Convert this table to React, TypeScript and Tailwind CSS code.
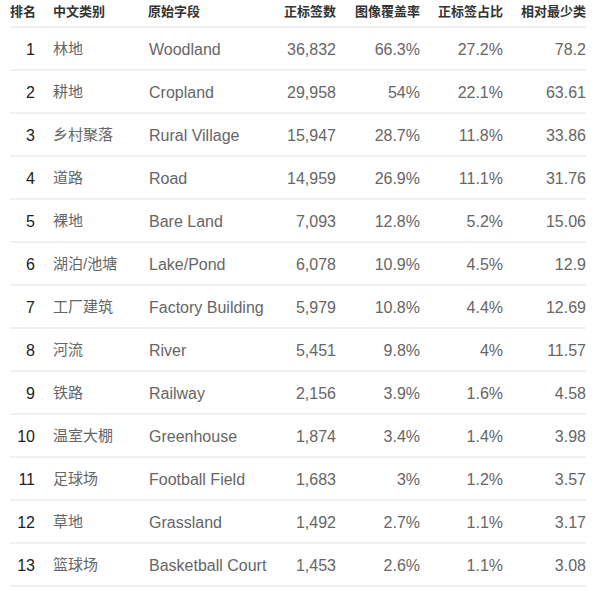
import React from "react";

interface Row {
  rank: number;
  zh: string;
  en: string;
  count: string;
  cover: string;
  ratio: string;
  rel: string;
}

const rows: Row[] = [
  { rank: 1, zh: "林地", en: "Woodland", count: "36,832", cover: "66.3%", ratio: "27.2%", rel: "78.2" },
  { rank: 2, zh: "耕地", en: "Cropland", count: "29,958", cover: "54%", ratio: "22.1%", rel: "63.61" },
  { rank: 3, zh: "乡村聚落", en: "Rural Village", count: "15,947", cover: "28.7%", ratio: "11.8%", rel: "33.86" },
  { rank: 4, zh: "道路", en: "Road", count: "14,959", cover: "26.9%", ratio: "11.1%", rel: "31.76" },
  { rank: 5, zh: "裸地", en: "Bare Land", count: "7,093", cover: "12.8%", ratio: "5.2%", rel: "15.06" },
  { rank: 6, zh: "湖泊/池塘", en: "Lake/Pond", count: "6,078", cover: "10.9%", ratio: "4.5%", rel: "12.9" },
  { rank: 7, zh: "工厂建筑", en: "Factory Building", count: "5,979", cover: "10.8%", ratio: "4.4%", rel: "12.69" },
  { rank: 8, zh: "河流", en: "River", count: "5,451", cover: "9.8%", ratio: "4%", rel: "11.57" },
  { rank: 9, zh: "铁路", en: "Railway", count: "2,156", cover: "3.9%", ratio: "1.6%", rel: "4.58" },
  { rank: 10, zh: "温室大棚", en: "Greenhouse", count: "1,874", cover: "3.4%", ratio: "1.4%", rel: "3.98" },
  { rank: 11, zh: "足球场", en: "Football Field", count: "1,683", cover: "3%", ratio: "1.2%", rel: "3.57" },
  { rank: 12, zh: "草地", en: "Grassland", count: "1,492", cover: "2.7%", ratio: "1.1%", rel: "3.17" },
  { rank: 13, zh: "篮球场", en: "Basketball Court", count: "1,453", cover: "2.6%", ratio: "1.1%", rel: "3.08" },
];

const headers = ["排名", "中文类别", "原始字段", "正标签数", "图像覆盖率", "正标签占比", "相对最少类"];

// header alignment per column
const headCls = [
  "justify-start",
  "justify-start",
  "justify-start",
  "justify-end pr-[17px]",
  "justify-end pr-[18px]",
  "justify-end pr-[18px]",
  "justify-end",
];

// body alignment per column
const bodyCls = [
  "justify-end pr-[18px] text-[16px] text-[#222]",
  "justify-start text-[15px] text-[#666]",
  "justify-start pl-px text-[16px] text-[#666]",
  "justify-end pr-[17px] text-[16px] text-[#666]",
  "justify-end pr-[18px] text-[16px] text-[#666]",
  "justify-end pr-[18px] text-[16px] text-[#666]",
  "justify-end text-[16px] text-[#666]",
];

export default function App() {
  return (
    <div className="bg-white w-[606px] h-[591px] px-[10px] font-['Liberation_Sans','Noto_Sans_CJK_SC',sans-serif]">
      <div className="grid grid-cols-[43px_95px_135px_70px_85px_83px_65px]">
        {headers.map((h, i) => (
          <div
            key={h}
            className={`flex items-center whitespace-nowrap h-[28px] pb-[3px] border-b-2 border-[#f0f0f0] text-[13px] font-bold text-[#333] ${headCls[i]}`}
          >
            {h}
          </div>
        ))}
        {rows.map((r) => {
          const cells = [r.rank, r.zh, r.en, r.count, r.cover, r.ratio, r.rel];
          return cells.map((c, i) => (
            <div
              key={`${r.rank}-${i}`}
              className={`flex items-center whitespace-nowrap h-[43px] pt-[2px] border-b-2 border-[#f0f0f0] ${bodyCls[i]}`}
            >
              {c}
            </div>
          ));
        })}
      </div>
    </div>
  );
}
